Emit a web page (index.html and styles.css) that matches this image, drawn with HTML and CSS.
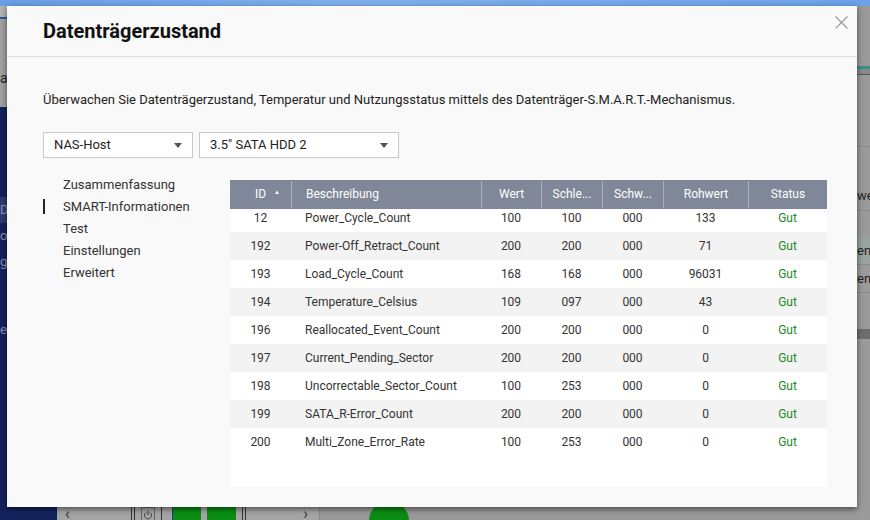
FILE: index.html
```html
<!DOCTYPE html>
<html lang="de">
<head>
  <meta charset="UTF-8">
  <title>Datenträgerzustand</title>
  <link rel="stylesheet" href="styles.css">
</head>
<body>

  <!-- Desktop im Hintergrund (abgedunkelt) -->
  <div class="desk">
    <div class="desk-top"></div>
    <div class="desk-left">
      <div class="dl-grey"><span>a</span></div>
      <div class="dl-navy">
        <span class="dl-tile">D</span>
        <span>ot</span>
        <span>g</span>
        <span class="dl-gap">e</span>
      </div>
    </div>
    <div class="desk-right">
      <div class="dr-teal"></div>
      <div class="dr-line"></div>
      <div class="dr-row dr-first">we</div>
      <div class="dr-row dr-hl">en</div>
      <div class="dr-row">en</div>
      <div class="dr-dark"></div>
    </div>
    <div class="desk-bottom">
      <div class="db-navy"></div>
      <div class="db-bar">
        <span class="db-arrow">&lsaquo;</span>
        <span class="db-sep"></span>
        <span class="db-power">
          <svg width="10" height="10" viewBox="0 0 10 10"><path d="M3 2.5 A3.5 3.5 0 1 0 7 2.5 M5 0.5 V5" stroke="#444" stroke-width="1" fill="none"/></svg>
        </span>
        <span class="db-sep db-sep-s"></span>
        <span class="db-green db-green-a"></span>
        <span class="db-green"></span>
        <span class="db-sep"></span>
        <span class="db-arrow db-right">&rsaquo;</span>
      </div>
      <div class="db-circle"></div>
    </div>
  </div>

  <!-- Dialog -->
  <div class="dialog">
    <div class="dlg-head">
      <h1>Datenträgerzustand</h1>
      <svg class="close" width="13" height="13" viewBox="0 0 13 13">
        <path d="M0.5 0.5 L12.5 12.5 M12.5 0.5 L0.5 12.5" stroke="#9a9a9a" stroke-width="1.1" fill="none"/>
      </svg>
    </div>

    <div class="dlg-body">
      <p class="intro">Überwachen Sie Datenträgerzustand, Temperatur und Nutzungsstatus mittels des Datenträger-S.M.A.R.T.-Mechanismus.</p>

      <div class="selects">
        <div class="select sel-host">NAS-Host<span class="caret"></span></div>
        <div class="select sel-disk">3.5" SATA HDD 2<span class="caret"></span></div>
      </div>

      <div class="main">
        <ul class="nav">
          <li>Zusammenfassung</li>
          <li class="active">SMART-Informationen</li>
          <li>Test</li>
          <li>Einstellungen</li>
          <li>Erweitert</li>
        </ul>

        <div class="grid">
          <div class="grid-head row">
            <div class="c-id">ID<span class="sort">&#9650;</span></div>
            <div class="c-desc">Beschreibung</div>
            <div>Wert</div>
            <div>Schle...</div>
            <div>Schw...</div>
            <div>Rohwert</div>
            <div>Status</div>
          </div>
          <div class="grid-body" id="grid-body"></div>
        </div>
      </div>
    </div>
  </div>

  <script>
    const rows = [
      [12, "Power_Cycle_Count", "100", "100", "000", "133"],
      [192, "Power-Off_Retract_Count", "200", "200", "000", "71"],
      [193, "Load_Cycle_Count", "168", "168", "000", "96031"],
      [194, "Temperature_Celsius", "109", "097", "000", "43"],
      [196, "Reallocated_Event_Count", "200", "200", "000", "0"],
      [197, "Current_Pending_Sector", "200", "200", "000", "0"],
      [198, "Uncorrectable_Sector_Count", "100", "253", "000", "0"],
      [199, "SATA_R-Error_Count", "200", "200", "000", "0"],
      [200, "Multi_Zone_Error_Rate", "100", "253", "000", "0"]
    ];

    const body = document.getElementById("grid-body");
    rows.forEach((r) => {
      const row = document.createElement("div");
      row.classList.add("row");
      row.innerHTML = `
        <div class="c-id">${r[0]}</div>
        <div class="c-desc">${r[1]}</div>
        <div>${r[2]}</div>
        <div>${r[3]}</div>
        <div>${r[4]}</div>
        <div>${r[5]}</div>
        <div class="ok">Gut</div>
      `;
      body.appendChild(row);
    });
  </script>
</body>
</html>
```

FILE: styles.css
```css
* {
  box-sizing: border-box;
}

body {
  margin: 0;
  width: 870px;
  height: 520px;
  overflow: hidden;
  font-family: Roboto, "Liberation Sans", Arial, sans-serif;
  color: #333;
  background-color: #9a9a9a;
  position: relative;
}

/* Hintergrund-Desktop */
.desk {
  width: 870px;
  height: 520px;
  position: relative;
}

.desk-top {
  height: 6px;
  background: linear-gradient(to right, #6b9ee4, #80b0ee 40%, #6fa2e8);
}

.desk-left {
  position: absolute;
  left: 0;
  top: 6px;
  width: 7px;
  bottom: 0;
  display: flex;
  flex-direction: column;
}

.dl-grey {
  height: 101px;
  background: #a2a2a2;
  border-top: 11px solid #b4b4b4;
  box-shadow: inset 0 2px 0 #2c5aa0;
  font-size: 14px;
  color: #222;
  padding-top: 53px;
  overflow: hidden;
}

.dl-navy {
  flex: 1;
  background: #13225c;
  display: flex;
  flex-direction: column;
  font-size: 13px;
  color: #8a93b4;
  overflow: hidden;
  padding-top: 90px;
  line-height: 26px;
}

.dl-tile {
  background: #2b3a70;
}

.dl-gap {
  margin-top: 42px;
}

.desk-right {
  position: absolute;
  right: 0;
  top: 6px;
  width: 13px;
  bottom: 13px;
  background: #9b9b9b;
  font-size: 13px;
  color: #222;
  overflow: hidden;
  display: flex;
  flex-direction: column;
}

.dr-teal {
  height: 9px;
  margin-top: 60px;
  border-top: 3px solid #3a8f87;
  border-bottom: 1px solid #555;
  background: #8a8a8a;
}

.dr-line {
  height: 40px;
  border-bottom: 1px solid #8a8a8a;
  margin-top: 32px;
}

.dr-row {
  height: 28px;
  line-height: 28px;
  border-bottom: 1px solid #8a8a8a;
  white-space: nowrap;
}

.dr-first {
  height: 30px;
  line-height: 30px;
  margin-top: 34px;
  margin-bottom: 26px;
}

.dr-hl {
  background: #97a49f;
}

.dr-dark {
  height: 10px;
  margin-top: 36px;
  background: #6e6e6e;
}

.desk-bottom {
  position: absolute;
  left: 0;
  right: 0;
  bottom: 0;
  height: 13px;
  display: flex;
}

.db-navy {
  width: 57px;
  background: #13225c;
}

.db-bar {
  width: 263px;
  background: #a5a5a5;
  display: flex;
  align-items: center;
  border-right: 1px solid #888;
  padding-left: 8px;
}

.db-arrow {
  font-size: 16px;
  color: #333;
  width: 66px;
}

.db-right {
  width: 62px;
  text-align: right;
}

.db-sep {
  width: 4px;
  height: 13px;
  border-left: 1px solid #333;
  border-right: 1px solid #333;
}

.db-sep-s {
  width: 1px;
  border-right: none;
  margin: 0 10px 0 6px;
}

.db-power {
  width: 14px;
  height: 13px;
  margin-left: 6px;
  border: 1px solid #666;
  border-bottom: none;
  display: flex;
  justify-content: center;
  align-items: flex-end;
}

.db-green {
  width: 29px;
  height: 13px;
  background: #0a8d12;
  margin-right: 6px;
}

.db-green-a {
  border-left: 1px solid #1a3aa0;
}

.db-circle {
  width: 40px;
  height: 40px;
  border-radius: 50%;
  background: #0b8c12;
  margin-left: 49px;
  margin-top: -6px;
}

/* Dialog */
.dialog {
  position: absolute;
  left: 7px;
  top: 6px;
  width: 850px;
  height: 501px;
  background: #f9f9f9;
  box-shadow: 0 2px 6px rgba(0, 0, 0, 0.55);
  display: flex;
  flex-direction: column;
}

.dlg-head {
  height: 51px;
  border-bottom: 1px solid #dedede;
  display: flex;
  align-items: center;
  justify-content: space-between;
  padding: 0 9px 0 36px;
}

.dlg-head h1 {
  margin: 0;
  font-size: 20px;
  font-weight: bold;
  color: #111;
}

.close {
  align-self: flex-start;
  margin-top: 10px;
}

.dlg-body {
  flex: 1;
  padding: 35px 30px 21px 36px;
  display: flex;
  flex-direction: column;
}

.intro {
  margin: 0;
  font-size: 13px;
  line-height: 16px;
  color: #222;
}

.selects {
  display: flex;
  gap: 6px;
  margin-top: 24px;
}

.select {
  height: 26px;
  background: #fff;
  border: 1px solid #c8c8c8;
  font-size: 13px;
  line-height: 24px;
  padding-left: 10px;
  color: #222;
  display: flex;
  justify-content: space-between;
  align-items: center;
}

.sel-host {
  width: 150px;
  padding-right: 10px;
}

.sel-disk {
  width: 200px;
  padding-right: 10px;
}

.caret {
  width: 0;
  height: 0;
  border-left: 4px solid transparent;
  border-right: 4px solid transparent;
  border-top: 5px solid #555;
}

.main {
  flex: 1;
  display: flex;
  margin-top: 16px;
}

.nav {
  list-style: none;
  margin: 0;
  padding: 0;
  width: 187px;
}

.nav li {
  font-size: 13px;
  line-height: 22px;
  padding-left: 20px;
  color: #333;
  position: relative;
}

.nav li.active::before {
  content: "";
  position: absolute;
  left: 0;
  top: 3px;
  width: 2px;
  height: 15px;
  background: #222;
}

.grid {
  flex: 1;
  margin-top: 6px;
  background: #fff;
  display: flex;
  flex-direction: column;
}

.row {
  display: grid;
  grid-template-columns: 61px 190px 60px 61px 61px 85px 1fr;
  align-items: center;
  height: 28px;
  font-size: 12px;
  text-align: center;
}

.row > div {
  white-space: nowrap;
}

.row .c-desc {
  text-align: left;
  padding-left: 14px;
}

.grid-head {
  height: 29px;
  background: #7f8798;
  color: #fff;
  position: relative;
  z-index: 1;
}

.grid-head > div {
  height: 27px;
  line-height: 27px;
  border-left: 1px solid #a9afbc;
}

.grid-head > div:first-child {
  border-left: none;
}

.grid-head .c-id {
  position: relative;
}

.sort {
  position: absolute;
  left: 44px;
  top: -3px;
  font-size: 6px;
}

.grid-body {
  flex: 1;
  overflow: hidden;
  color: #333;
}

.grid-body .row:first-child {
  margin-top: -5px;
}

.grid-body .row:nth-child(even) {
  background: #f3f3f3;
}

.ok {
  color: #1d8a1d;
}
```
